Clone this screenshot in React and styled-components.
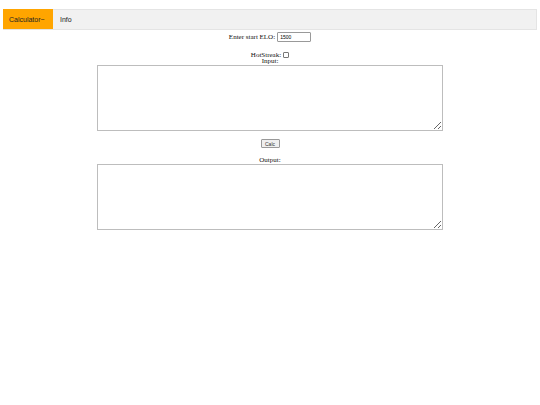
import React from 'react';
import styled, { createGlobalStyle } from 'styled-components';

const Global = createGlobalStyle`
  body {
    margin: 0;
    padding: 9px 3px 0;
    background: #fff;
    font-family: "Liberation Serif", serif;
    font-size: 7px;
    color: #111;
  }
`;

export default function App() {
  return (
    <>
      <Global />
      <Nav>
        <Tab active>Calculator~</Tab>
        <Tab>Info</Tab>
      </Nav>
      <Main>
        <Row>
          Enter start ELO: <EloInput defaultValue="1500" />
        </Row>
        <Row top={9} h={7}>
          HotStreak: <Check type="checkbox" />
        </Row>
        <Label>Input:</Label>
        <Area />
        <CalcButton>Calc</CalcButton>
        <Label top={9}>Output:</Label>
        <Area />
      </Main>
    </>
  );
}

const Nav = styled.div`
  display: flex;
  height: 19px;
  background: #f1f1f1;
  border: 1px solid #e4e4e4;
  border-left: none;
`;

const Tab = styled.div`
  display: flex;
  align-items: center;
  padding: 0 ${(p) => (p.active ? '6px' : '7px')};
  width: ${(p) => (p.active ? '50px' : 'auto')};
  box-sizing: border-box;
  font-family: "Liberation Sans", Arial, sans-serif;
  font-size: 7px;
  color: #222;
  background: ${(p) => (p.active ? '#ffa500' : 'transparent')};
  margin: ${(p) => (p.active ? '-1px 0 0' : '0')};
`;

const Main = styled.div`
  display: flex;
  flex-direction: column;
  align-items: center;
  padding-top: 1px;
`;

const Row = styled.div`
  display: flex;
  align-items: center;
  gap: 2px;
  height: ${(p) => p.h || 11}px;
  margin-top: ${(p) => p.top || 0}px;
`;

const EloInput = styled.input`
  width: 34px;
  height: 10px;
  box-sizing: border-box;
  border: 1px solid #999;
  border-radius: 1px;
  padding: 0 2px;
  font-family: "Liberation Sans", Arial, sans-serif;
  font-size: 5px;
  margin: 0;
`;

const Check = styled.input`
  appearance: none;
  width: 6px;
  height: 6px;
  margin: 0;
  border: 1px solid #777;
  border-radius: 1px;
  background: #fff;
`;

const Label = styled.div`
  line-height: 7px;
  margin-top: ${(p) => p.top || 0}px;
`;

const Area = styled.textarea`
  width: 346px;
  height: 66px;
  box-sizing: border-box;
  border: 1px solid #bdbdbd;
  margin: 0;
  resize: vertical;
`;

const CalcButton = styled.button`
  margin-top: 8px;
  height: 9px;
  width: 19px;
  padding: 0;
  font-family: "Liberation Sans", Arial, sans-serif;
  font-size: 5px;
  color: #333;
  background: #efefef;
  border: 1px solid #999;
  border-radius: 1px;
`;
